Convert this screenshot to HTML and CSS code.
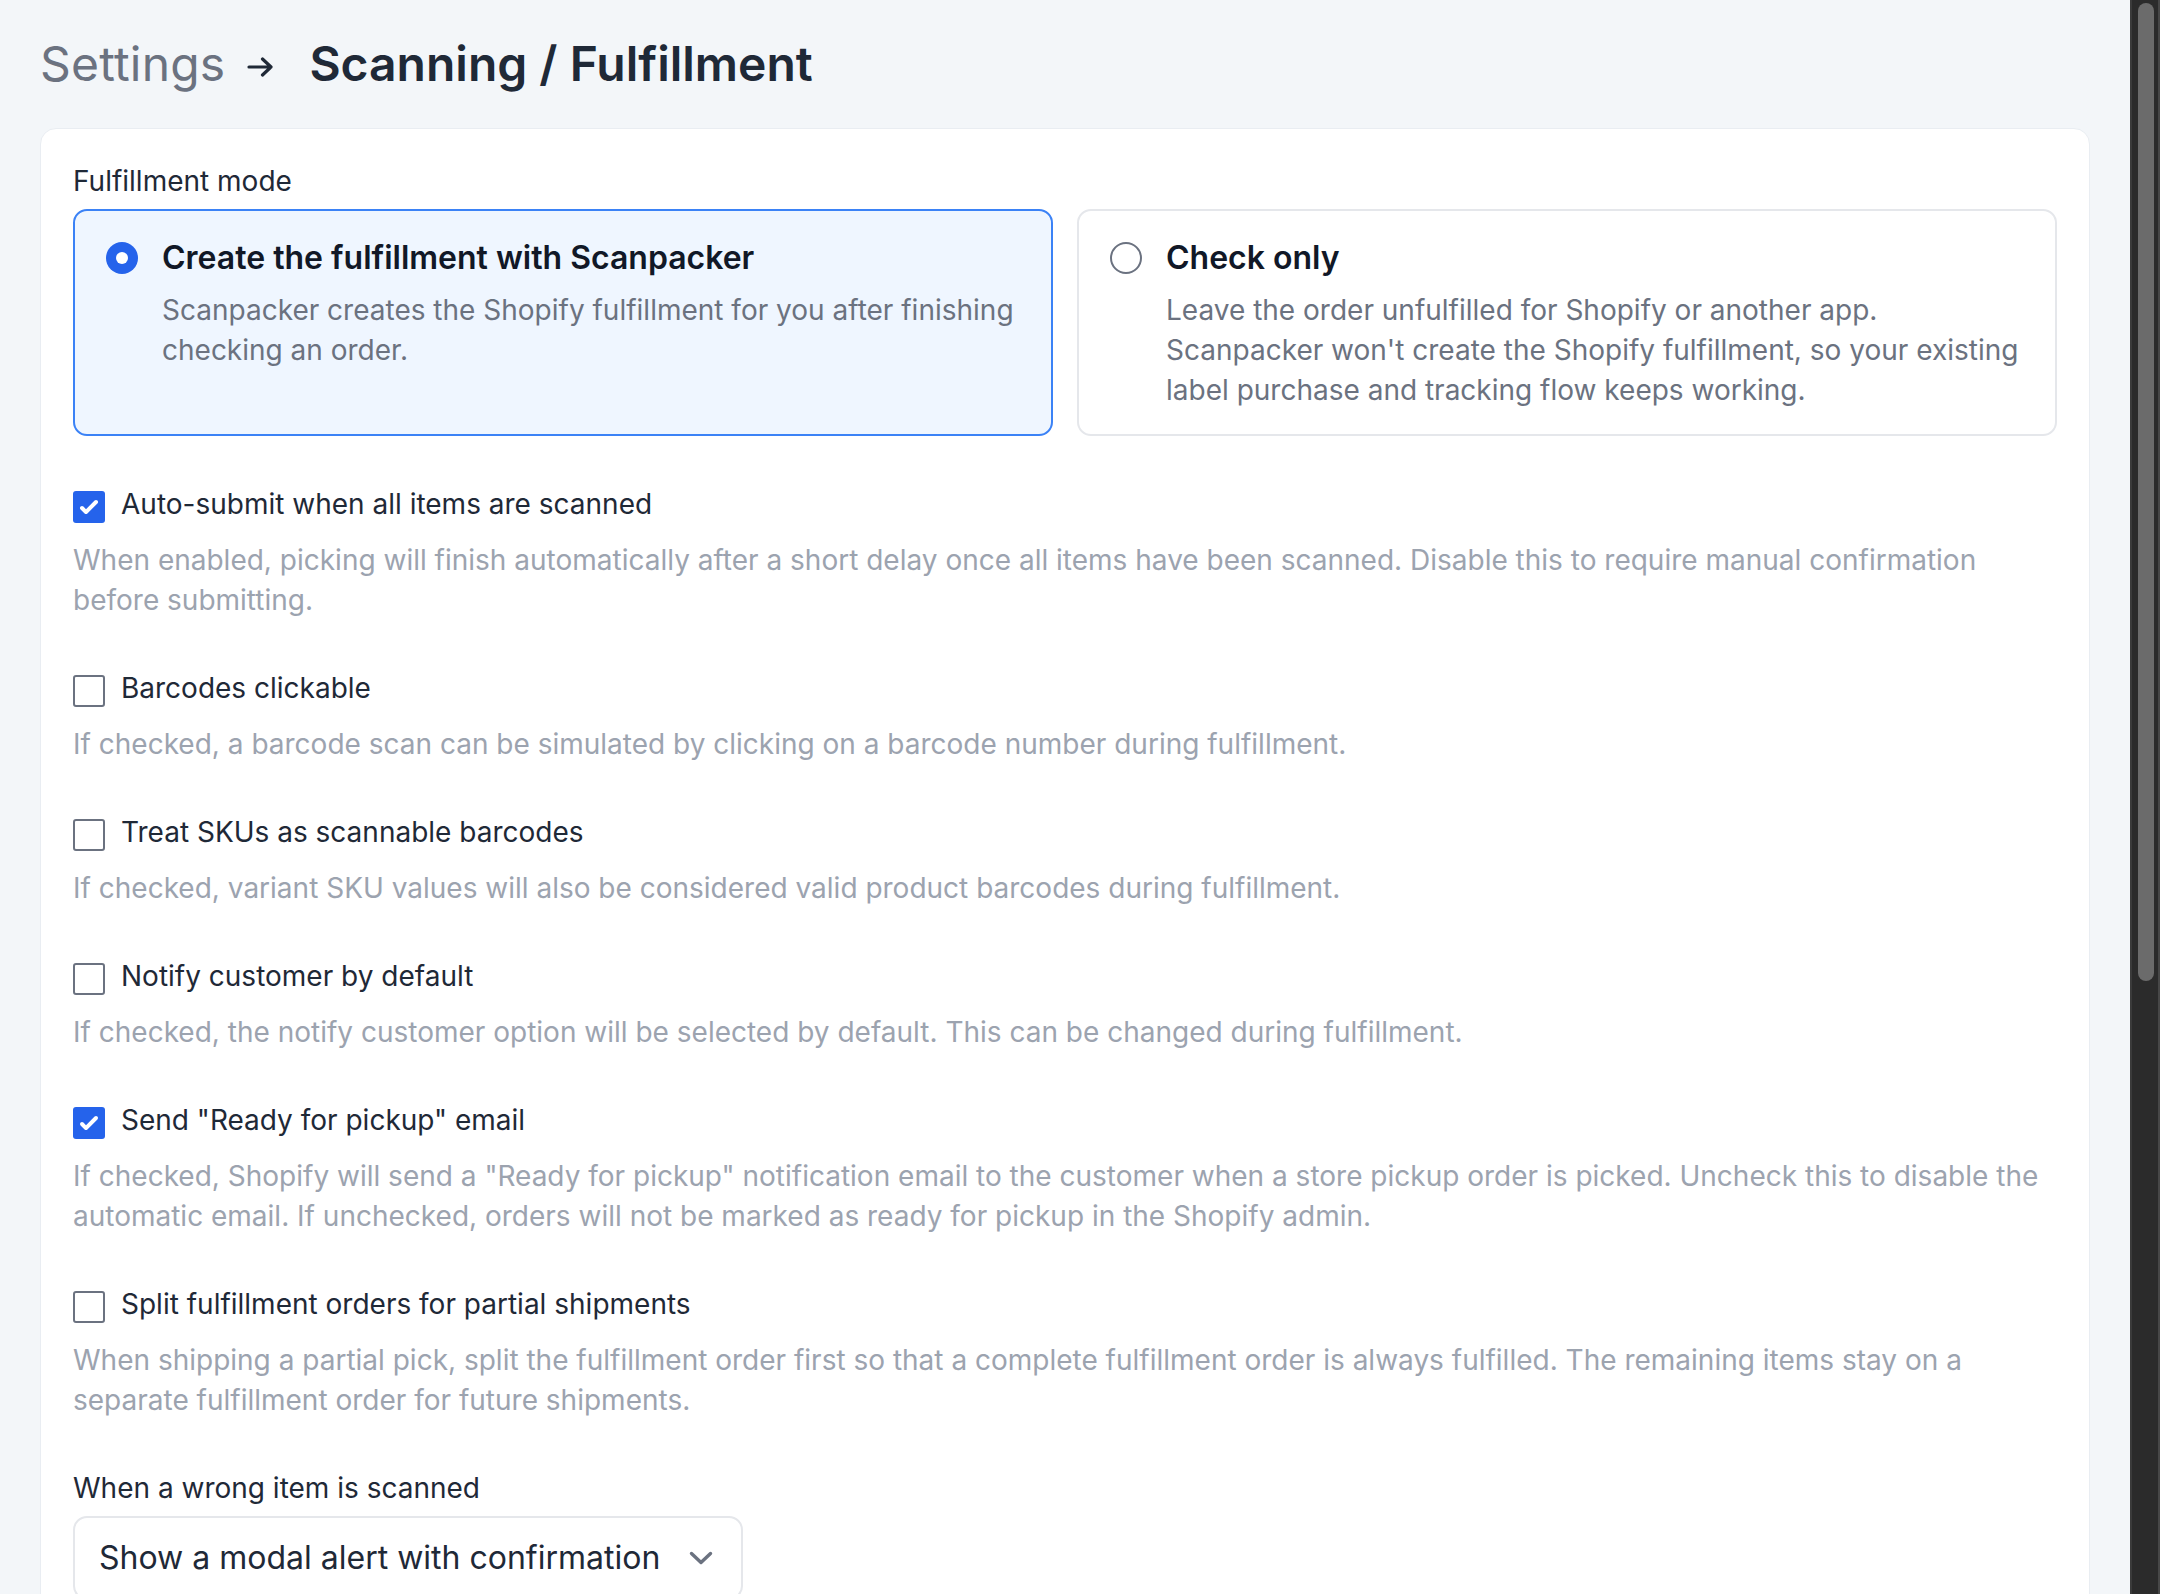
FILE: index.html
```html
<!DOCTYPE html>
<html lang="en">
<head>
    <meta charset="UTF-8">
    <meta name="viewport" content="width=device-width, initial-scale=1.0">
    <title>Settings - Scanning / Fulfillment</title>
    <link rel="stylesheet" href="styles.css">
</head>
<body>

<div class="app">
    <main class="page">
        <!-- Breadcrumb title -->
        <h1 class="page-title">
            <span class="crumb">Settings</span>
            <svg class="crumb-arrow" viewBox="0 0 26 20" fill="none" stroke="currentColor" stroke-width="3.2" stroke-linecap="round" stroke-linejoin="round">
                <path d="M2 10h22M15.5 2l8.5 8-8.5 8"/>
            </svg>
            <span>Scanning / Fulfillment</span>
        </h1>

        <section class="panel">
            <!-- Fulfillment mode -->
            <div class="field">
                <div class="field-label">Fulfillment mode</div>
                <div class="mode-options">
                    <div class="mode-option is-selected">
                        <span class="radio is-checked"></span>
                        <div>
                            <div class="mode-title">Create the fulfillment with Scanpacker</div>
                            <p class="mode-desc">Scanpacker creates the Shopify fulfillment for you after finishing checking an order.</p>
                        </div>
                    </div>
                    <div class="mode-option">
                        <span class="radio"></span>
                        <div>
                            <div class="mode-title">Check only</div>
                            <p class="mode-desc">Leave the order unfulfilled for Shopify or another app. Scanpacker won't create the Shopify fulfillment, so your existing label purchase and tracking flow keeps working.</p>
                        </div>
                    </div>
                </div>
            </div>

            <!-- Checkbox settings -->
            <div class="check-row">
                <div class="check-line">
                    <span class="checkbox is-checked">
                        <svg viewBox="0 0 16 16" fill="#fff"><path d="M12.207 4.793a1 1 0 010 1.414l-5 5a1 1 0 01-1.414 0l-2-2a1 1 0 011.414-1.414L6.5 9.086l4.293-4.293a1 1 0 011.414 0z"/></svg>
                    </span>
                    <span>Auto-submit when all items are scanned</span>
                </div>
                <p class="check-desc">When enabled, picking will finish automatically after a short delay once all items have been scanned. Disable this to require manual confirmation before submitting.</p>
            </div>

            <div class="check-row">
                <div class="check-line">
                    <span class="checkbox"></span>
                    <span>Barcodes clickable</span>
                </div>
                <p class="check-desc">If checked, a barcode scan can be simulated by clicking on a barcode number during fulfillment.</p>
            </div>

            <div class="check-row">
                <div class="check-line">
                    <span class="checkbox"></span>
                    <span>Treat SKUs as scannable barcodes</span>
                </div>
                <p class="check-desc">If checked, variant SKU values will also be considered valid product barcodes during fulfillment.</p>
            </div>

            <div class="check-row">
                <div class="check-line">
                    <span class="checkbox"></span>
                    <span>Notify customer by default</span>
                </div>
                <p class="check-desc">If checked, the notify customer option will be selected by default. This can be changed during fulfillment.</p>
            </div>

            <div class="check-row">
                <div class="check-line">
                    <span class="checkbox is-checked">
                        <svg viewBox="0 0 16 16" fill="#fff"><path d="M12.207 4.793a1 1 0 010 1.414l-5 5a1 1 0 01-1.414 0l-2-2a1 1 0 011.414-1.414L6.5 9.086l4.293-4.293a1 1 0 011.414 0z"/></svg>
                    </span>
                    <span>Send "Ready for pickup" email</span>
                </div>
                <p class="check-desc">If checked, Shopify will send a "Ready for pickup" notification email to the customer when a store pickup order is picked. Uncheck this to disable the automatic email. If unchecked, orders will not be marked as ready for pickup in the Shopify admin.</p>
            </div>

            <div class="check-row">
                <div class="check-line">
                    <span class="checkbox"></span>
                    <span>Split fulfillment orders for partial shipments</span>
                </div>
                <p class="check-desc">When shipping a partial pick, split the fulfillment order first so that a complete fulfillment order is always fulfilled. The remaining items stay on a separate fulfillment order for future shipments.</p>
            </div>

            <!-- Wrong item behaviour -->
            <div class="field">
                <div class="field-label">When a wrong item is scanned</div>
                <div class="select">
                    <span>Show a modal alert with confirmation</span>
                    <svg class="select-chevron" viewBox="0 0 24 14" fill="none" stroke="#6b7280" stroke-width="3.4" stroke-linecap="round" stroke-linejoin="round">
                        <path d="M2.5 2.5l9.5 9 9.5-9"/>
                    </svg>
                </div>
            </div>
        </section>
    </main>

    <!-- Window scrollbar -->
    <div class="scrollbar">
        <div class="scrollbar-thumb"></div>
    </div>
</div>

</body>
</html>
```

FILE: styles.css
```css
/* Reset */
* {
    margin: 0;
    padding: 0;
    box-sizing: border-box;
    font-family: 'Inter', 'Liberation Sans', sans-serif;
}

html, body {
    height: 100%;
}

body {
    background-color: #f3f6f9;
    color: #1f2937;
    overflow: hidden;
}

.app {
    display: flex;
    height: 100vh;
}

.page {
    flex: 1;
    min-width: 0;
    padding: 32px 40px;
    overflow: hidden;
}

/* Breadcrumb title */
.page-title {
    display: flex;
    align-items: center;
    font-size: 48px;
    line-height: 64px;
    font-weight: 600;
    color: #1f2937;
    margin-bottom: 32px;
}

.crumb {
    color: #6b7280;
    font-weight: 400;
    letter-spacing: 0.2px;
}

.crumb-arrow {
    width: 26px;
    height: 20px;
    margin: 5px 36px 0 22px;
    color: #1f2937;
}

/* White settings panel */
.panel {
    display: flex;
    flex-direction: column;
    gap: 48px;
    background-color: #fff;
    border: 1px solid #e9edf2;
    border-radius: 16px;
    padding: 32px;
}

.field-label {
    font-size: 28px;
    line-height: 40px;
    font-weight: 400;
    color: #1f2937;
}

/* Fulfillment mode cards */
.mode-options {
    display: grid;
    grid-template-columns: 1fr 1fr;
    gap: 24px;
    margin-top: 8px;
}

.mode-option {
    display: flex;
    align-items: flex-start;
    gap: 24px;
    padding: 23px 31px 24px;
    border: 2px solid #e5e7eb;
    border-radius: 14px;
    background-color: #fff;
}

.mode-option.is-selected {
    border-color: #3b82f6;
    background-color: #eff6ff;
}

.radio {
    flex: none;
    width: 32px;
    height: 32px;
    margin-top: 8px;
    border: 2px solid #6b7280;
    border-radius: 50%;
    background-color: #fff;
}

.radio.is-checked {
    display: flex;
    align-items: center;
    justify-content: center;
    border: none;
    background-color: #2563eb;
}

.radio.is-checked::after {
    content: '';
    width: 12px;
    height: 12px;
    border-radius: 50%;
    background-color: #fff;
}

.mode-title {
    font-size: 32px;
    line-height: 48px;
    font-weight: 600;
    color: #111827;
}

.mode-desc {
    margin-top: 8px;
    font-size: 28px;
    line-height: 40px;
    color: #6b7280;
}

/* Checkbox rows */
.check-line {
    display: flex;
    align-items: flex-start;
    gap: 16px;
    font-size: 28px;
    line-height: 40px;
    color: #1f2937;
}

.checkbox {
    flex: none;
    width: 32px;
    height: 32px;
    margin-top: 7px;
    border: 2px solid #6b7280;
    border-radius: 3px;
    background-color: #fff;
}

.checkbox.is-checked {
    border: none;
    background-color: #2563eb;
}

.checkbox svg {
    display: block;
    width: 32px;
    height: 32px;
}

.check-desc {
    margin-top: 16px;
    font-size: 28px;
    line-height: 40px;
    color: #9ca3af;
}

/* Dropdown */
.select {
    display: inline-flex;
    align-items: center;
    gap: 29px;
    margin-top: 8px;
    padding: 16px 28px 16px 24px;
    border: 2px solid #e5e7eb;
    border-radius: 14px;
    background-color: #fff;
    font-size: 32px;
    line-height: 48px;
    color: #1f2937;
}

.select-chevron {
    width: 24px;
    height: 14px;
}

/* Scrollbar strip on the right */
.scrollbar {
    flex: none;
    width: 30px;
    padding: 3px 4px 0 6px;
    background-color: #2b2b2b;
    border-left: 2px solid #3b3b3b;
    border-right: 2px solid #474747;
}

.scrollbar-thumb {
    height: 978px;
    border-radius: 8px;
    background-color: #6b6b6b;
}
```
